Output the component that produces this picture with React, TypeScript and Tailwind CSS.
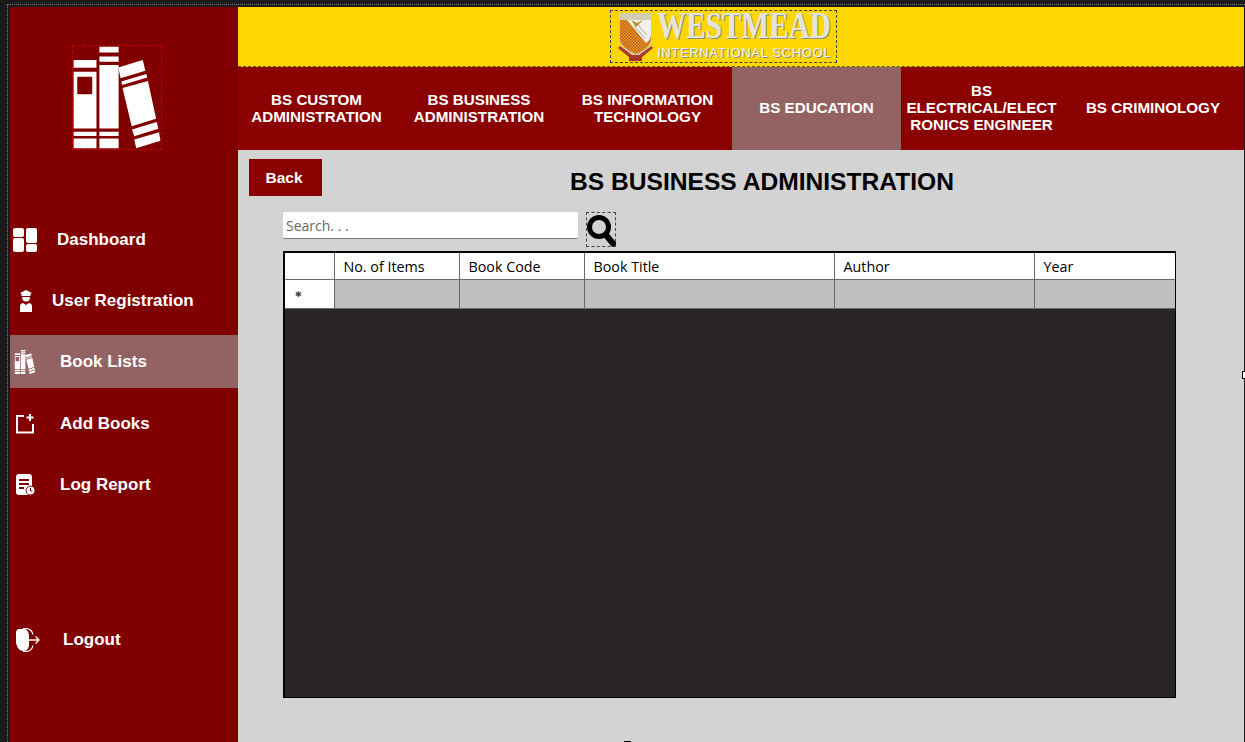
import { ReactNode } from 'react';

const tabs = [
  { lines: ['BS CUSTOM', 'ADMINISTRATION'], width: 'w-[157px]' },
  { lines: ['BS BUSINESS', 'ADMINISTRATION'], width: 'w-[168px]' },
  { lines: ['BS INFORMATION', 'TECHNOLOGY'], width: 'w-[169px]' },
  { lines: ['BS EDUCATION'], width: 'w-[169px]', active: true },
  { lines: ['BS', 'ELECTRICAL/ELECT', 'RONICS ENGINEER'], width: 'w-[161px]' },
  { lines: ['BS CRIMINOLOGY'], width: 'w-[182px]' },
];

function BooksIcon({ className }: { className: string }) {
  return (
    <svg viewBox="0 0 270 312" className={className} fill="currentColor">
      <path d="M2 41h70v24H2zM2 77h70v174H2zM2 261h70v13H2zM2 282h70v30H2z" />
      <rect x="13" y="92" width="46" height="54" rx="3" fill="var(--hole)" />
      <path d="M81 0h59v18H81zM81 30h59v16H81zM81 56h59v195H81zM81 261h59v13H81zM81 282h59v30H81z" />
      <path d="M139 64l75-23 8 33-76 23zM148 107l77-23 3 11-77 23zM152 127l78-22 25 116-75 23zM181 254l76-23 5 21-74 23zM188 285l76-22 4 26-74 23z" />
    </svg>
  );
}

function DashboardIcon() {
  return (
    <svg viewBox="0 0 24 24" className="h-6 w-6" fill="white">
      <rect x="0" y="0" width="11" height="9" rx="2" />
      <rect x="0" y="10" width="11" height="14" rx="2" />
      <rect x="13" y="0" width="11" height="15" rx="2" />
      <rect x="13" y="16" width="11" height="8" rx="2" />
    </svg>
  );
}

function GraduateIcon() {
  return (
    <svg viewBox="0 0 14 22" className="h-[22px] w-[14px]" fill="white">
      <path d="M7 0l6 3-1.500 1v2H2.500V4L1 3z" />
      <path d="M3 7h8c0 3-1.500 4.500-4 4.500S3 10 3 7z" />
      <path d="M1 22v-6c0-2 2-3 3-3l3 2 3-2c1 0 3 1 3 3v6z" />
    </svg>
  );
}

function AddBookIcon() {
  return (
    <svg viewBox="0 0 18 20" className="h-5 w-[18px]" fill="none" stroke="white" strokeWidth="2">
      <path d="M8 2H1v16.500h16V10" />
      <path d="M14 0v7M10.500 3.500h7" />
    </svg>
  );
}

function LogReportIcon() {
  return (
    <svg viewBox="0 0 19 22" className="h-[22px] w-[19px]">
      <rect x="0" y="0" width="16" height="21" rx="3" fill="white" />
      <path d="M3 6h10M3 10h10M3 14h5" stroke="#800000" strokeWidth="2" />
      <circle cx="14.500" cy="16.500" r="4.500" fill="white" stroke="#800000" />
      <path d="M14.500 14v3h2" stroke="#800000" fill="none" />
    </svg>
  );
}

function LogoutIcon() {
  return (
    <svg viewBox="0 0 24 24" className="h-6 w-6">
      <path d="M3 1h5c3 0 5 3 5 8v7c0 4-2 7-5 7-3 0-5-1-6-3-1-2-2-4-2-6V5c0-2 1-4 3-4z" fill="white" />
      <path d="M7 .5c5-.5 9 1 10 6M7 23.500c5 .5 9-1 10-6" fill="none" stroke="white" strokeWidth="1.200" />
      <path d="M13 12h10M19.500 8.500L23 12l-3.500 3.500" fill="none" stroke="white" strokeWidth="1.400" />
    </svg>
  );
}

function SearchIcon() {
  return (
    <svg viewBox="0 0 30 35" className="h-[35px] w-[30px]" fill="none" stroke="black">
      <circle cx="12" cy="14" r="9.500" strokeWidth="5" />
      <path d="M19 22l7 8.500" strokeWidth="6" strokeLinecap="round" />
    </svg>
  );
}

function Crest() {
  return (
    <svg viewBox="0 0 36 50" className="h-[50px] w-[36px] shrink-0">
      <defs>
        <pattern id="weave" width="3" height="3" patternUnits="userSpaceOnUse">
          <rect width="3" height="3" fill="#e4a320" />
          <rect width="1.500" height="1.500" fill="#c4551c" />
          <rect x="1.500" y="1.500" width="1.500" height="1.500" fill="#c4551c" />
        </pattern>
      </defs>
      <path d="M1 1h33v26c0 7-7 13-16 17C9 40 1 34 1 27z" fill="#d4ccb0" />
      <path d="M2 8h31v19c0 6-7 12-15 15C10 39 2 33 2 27z" fill="url(#weave)" />
      <path d="M9 8h24v14c0 4-2 7-5 9z" fill="#f2f0ea" />
      <path d="M13 8l5 7 7-7-6 3z" fill="#b98a2a" />
      <path d="M16 14l11 12M20 13l9 10" stroke="#8a8a86" strokeWidth=".7" />
      <path d="M0 36l12 10h11l12-10-1.500-2L21 43h-7L2 34z" fill="#a53a34" />
      <rect x="11" y="45" width="13" height="4" fill="#a8322c" />
    </svg>
  );
}

function NavItem({
  icon,
  label,
  rowClass,
  iconClass,
  textClass,
  active,
}: {
  icon: ReactNode;
  label: string;
  rowClass: string;
  iconClass: string;
  textClass: string;
  active?: boolean;
}) {
  return (
    <div className={`flex h-[53px] items-center ${rowClass} ${active ? 'bg-[#936363]' : ''}`}>
      <div className={`flex shrink-0 items-center justify-center ${iconClass}`}>{icon}</div>
      <span className={`text-[17px] font-bold text-white ${textClass}`}>{label}</span>
    </div>
  );
}

export default function App() {
  return (
    <div className="relative h-screen w-full overflow-hidden bg-[#1b1b1b] pl-[7px] pt-[4px] font-['Liberation_Sans',sans-serif]">
      <div className="h-full border-l border-t border-dotted border-[#777] pl-[2px] pt-[2px] pr-px">
        <div className="flex h-full">
          <aside className="flex w-[228px] shrink-0 flex-col bg-[#800000]">
            <div className="ml-[62px] mt-[38px] h-[105px] w-[90px] border border-dashed border-[#c80000] text-white [--hole:#800000]">
              <BooksIcon className="h-full w-full" />
            </div>
            <div className="mt-[63px] flex flex-col gap-2">
              <NavItem
                icon={<DashboardIcon />}
                label="Dashboard"
                rowClass="pl-[3px]"
                iconClass="w-6"
                textClass="ml-[20px]"
              />
              <NavItem
                icon={<GraduateIcon />}
                label="User Registration"
                rowClass="pl-[9px]"
                iconClass="w-[14px]"
                textClass="ml-[19px]"
              />
              <NavItem
                icon={<BooksIcon className="h-6 w-6" />}
                label="Book Lists"
                rowClass="pl-[3px] text-white [--hole:#936363]"
                iconClass="w-6"
                textClass="ml-[23px]"
                active
              />
              <NavItem
                icon={<AddBookIcon />}
                label="Add Books"
                rowClass="pl-[6px] mt-px"
                iconClass="w-[18px]"
                textClass="ml-[26px]"
              />
              <NavItem
                icon={<LogReportIcon />}
                label="Log Report"
                rowClass="pl-[6px]"
                iconClass="w-[19px]"
                textClass="ml-[25px]"
              />
            </div>
            <div className="mt-[102px]">
              <NavItem
                icon={<LogoutIcon />}
                label="Logout"
                rowClass="pl-[6px]"
                iconClass="w-6"
                textClass="ml-[23px]"
              />
            </div>
          </aside>

          <div className="flex min-w-0 flex-1 flex-col bg-[#d3d3d3]">
            <header className="flex h-[60px] items-start border-b border-dashed border-[#6b5a10] bg-[#ffd700] pl-[372px] pt-[3px]">
              <div className="flex h-[53px] w-[227px] items-center border border-dashed border-[#444] pl-[7px]">
                <Crest />
                <div className="ml-[3px] flex flex-col items-start">
                  <span className="origin-bottom-left scale-y-[1.3] font-['Liberation_Serif',serif] text-[29px] font-bold leading-[30px] tracking-[0.2px] text-[#e4e4da] [text-shadow:1px_1px_0_#8f8f86]">
                    WESTMEAD
                  </span>
                  <span className="mt-[2px] text-[13px] leading-[13px] tracking-[0.65px] text-[#f0efe6] [text-shadow:1px_1px_0_#8f8f86]">
                    INTERNATIONAL SCHOOL
                  </span>
                </div>
              </div>
            </header>

            <nav className="flex h-[83px] bg-[#8b0000]">
              {tabs.map((tab) => (
                <div
                  key={tab.lines.join(' ')}
                  className={`flex shrink-0 flex-col items-center justify-center pb-[2px] text-center text-[15.200px] font-bold leading-[17px] text-white ${tab.width} ${
                    tab.active ? 'bg-[#936363]' : ''
                  }`}
                >
                  {tab.lines.map((line) => (
                    <span key={line}>{line}</span>
                  ))}
                </div>
              ))}
            </nav>

            <main className="flex flex-1 flex-col">
              <div className="flex items-start pl-[11px] pt-[9px]">
                <button className="h-[37px] w-[73px] bg-[#8b0000] pr-[3px] text-[15.500px] font-bold text-white">Back</button>
                <h1 className="ml-[248px] mt-[9px] whitespace-nowrap text-[24.600px] font-bold leading-[28px] text-black">
                  BS BUSINESS ADMINISTRATION
                </h1>
              </div>

              <div className="ml-[45px] mt-[16px] flex items-start font-['Open_Sans',sans-serif]">
                <div className="flex h-[27px] w-[295px] items-center rounded-[2px] border-b border-[#777] bg-white pl-[3px] pt-px text-[14px] text-[#666]">
                  Search. . .
                </div>
                <div className="ml-[8px] h-[35px] w-[30px] border border-dashed border-[#444]">
                  <SearchIcon />
                </div>
              </div>

              <div className="ml-[45px] mt-[4px] h-[447px] w-[893px] border-[2px] border-b border-r border-black bg-[#292524] font-['Open_Sans',sans-serif] text-[14.300px] text-black">
                <table className="w-[890px] table-fixed border-collapse">
                  <colgroup>
                    <col className="w-[49px]" />
                    <col className="w-[125px]" />
                    <col className="w-[125px]" />
                    <col className="w-[250px]" />
                    <col className="w-[200px]" />
                    <col className="w-[141px]" />
                  </colgroup>
                  <thead>
                    <tr className="h-[26px] bg-white">
                      <th className="border-b border-r border-[#696969]" />
                      {['No. of Items', 'Book Code', 'Book Title', 'Author', 'Year'].map((h) => (
                        <th key={h} className="border-b border-r border-[#696969] pl-[9px] pt-[2px] text-left font-normal last:border-r-0">
                          {h}
                        </th>
                      ))}
                    </tr>
                  </thead>
                  <tbody>
                    <tr className="h-[29px] bg-[#bfbfbf]">
                      <td className="border-b border-r border-[#696969] bg-white pl-[10px] pt-[3px] font-['DejaVu_Sans',sans-serif] text-[8px] text-[#444]">
                        ✱
                      </td>
                      {[0, 1, 2, 3, 4].map((i) => (
                        <td key={i} className="border-b border-r border-[#696969] last:border-r-0" />
                      ))}
                    </tr>
                  </tbody>
                </table>
              </div>
            </main>
          </div>
        </div>
      </div>
      <div className="absolute bottom-0 left-[624px] h-px w-[7px] bg-black" />
      <div className="absolute right-0 top-[371px] h-[8px] w-[3px] rounded-l-[1px] border border-r-0 border-black bg-white" />
    </div>
  );
}
